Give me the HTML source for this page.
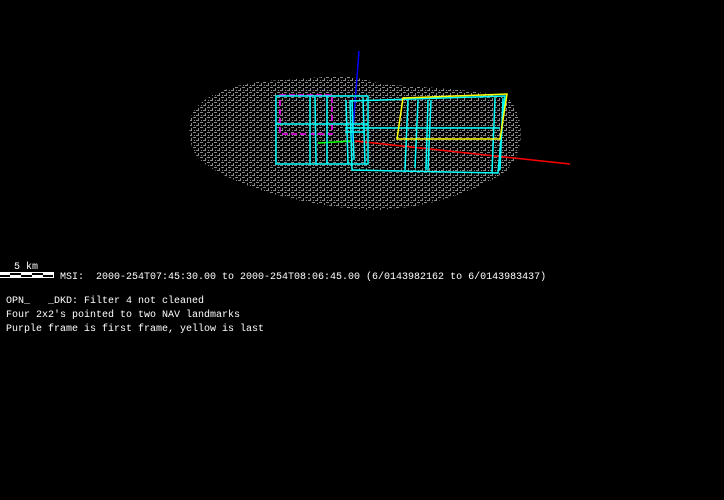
<!DOCTYPE html>
<html><head><meta charset="utf-8"><style>
html,body{margin:0;padding:0;background:#000;width:724px;height:500px;overflow:hidden}
.t{position:absolute;font-family:"Liberation Mono",monospace;font-size:10px;color:#fff;white-space:pre;line-height:14px}
</style></head><body>
<svg width="724" height="500" style="position:absolute;left:0;top:0" shape-rendering="crispEdges">
<defs>
<pattern id="p" width="7" height="5" patternUnits="userSpaceOnUse">
<rect x="0" y="0" width="3" height="1" fill="#8a8a8a"/>
<rect x="4" y="2" width="3" height="1" fill="#8a8a8a"/>
<rect x="2" y="3" width="1" height="2" fill="#8a8a8a"/>
<rect x="5" y="0" width="1" height="1" fill="#8a8a8a"/>
</pattern>
</defs>
<path d="M190 125 C188 100 230 82 280 80 C320 78 350 72 380 84 C420 88 480 88 510 100 C525 118 525 155 505 172 C470 195 420 210 370 210 C300 206 230 185 200 160 C190 150 189 135 190 125 Z" fill="url(#p)"/>
<g fill="none" stroke-width="1.5" shape-rendering="auto">
<path d="M359 51 L352 142" stroke="#0000ff"/>
<path d="M355 141 L570 164" stroke="#ff0000"/>
<path d="M318 143 L352 141" stroke="#00ff00"/>
<rect x="280" y="95" width="52" height="39" stroke="#ff00ff" stroke-dasharray="6,3"/>
<g stroke="#00ffff">
<rect x="276" y="96" width="92" height="68"/>
<path d="M276 124 L368 124 M310 96 L310 164 M315 97 L316 164 M327 96 L327 164 M346 100 L348 164 M352 100 L354 160 M363 98 L365 164"/>
<path d="M350 101 L505 96 L498 173 L352 170 Z"/>
<path d="M345 128 L500 128 M345 132 L365 132 M408 100 L405 170 M418 100 L415 168 M428 100 L426 170 M431 100 L428 170 M495 98 L492 173 M503 98 L500 170"/>
</g>
<path d="M403 98 L507 94 L500 139 L397 139 Z" stroke="#ffff00"/>
</g>
<g>
<rect x="0" y="272" width="54" height="6" fill="#fff"/>
<rect x="10" y="273" width="11" height="2" fill="#000"/>
<rect x="32" y="273" width="11" height="2" fill="#000"/>
<rect x="0" y="275" width="10" height="2" fill="#000"/>
<rect x="21" y="275" width="11" height="2" fill="#000"/>
<rect x="43" y="275" width="10" height="2" fill="#000"/>
</g>
</svg>
<div class="t" style="left:14px;top:261px">5 km</div>
<div class="t" style="left:60px;top:271px">MSI:  2000-254T07:45:30.00 to 2000-254T08:06:45.00 (6/0143982162 to 6/0143983437)</div>
<div class="t" style="left:6px;top:295px">OPN_   _DKD: Filter 4 not cleaned
Four 2x2's pointed to two NAV landmarks
Purple frame is first frame, yellow is last</div>
</body></html>
